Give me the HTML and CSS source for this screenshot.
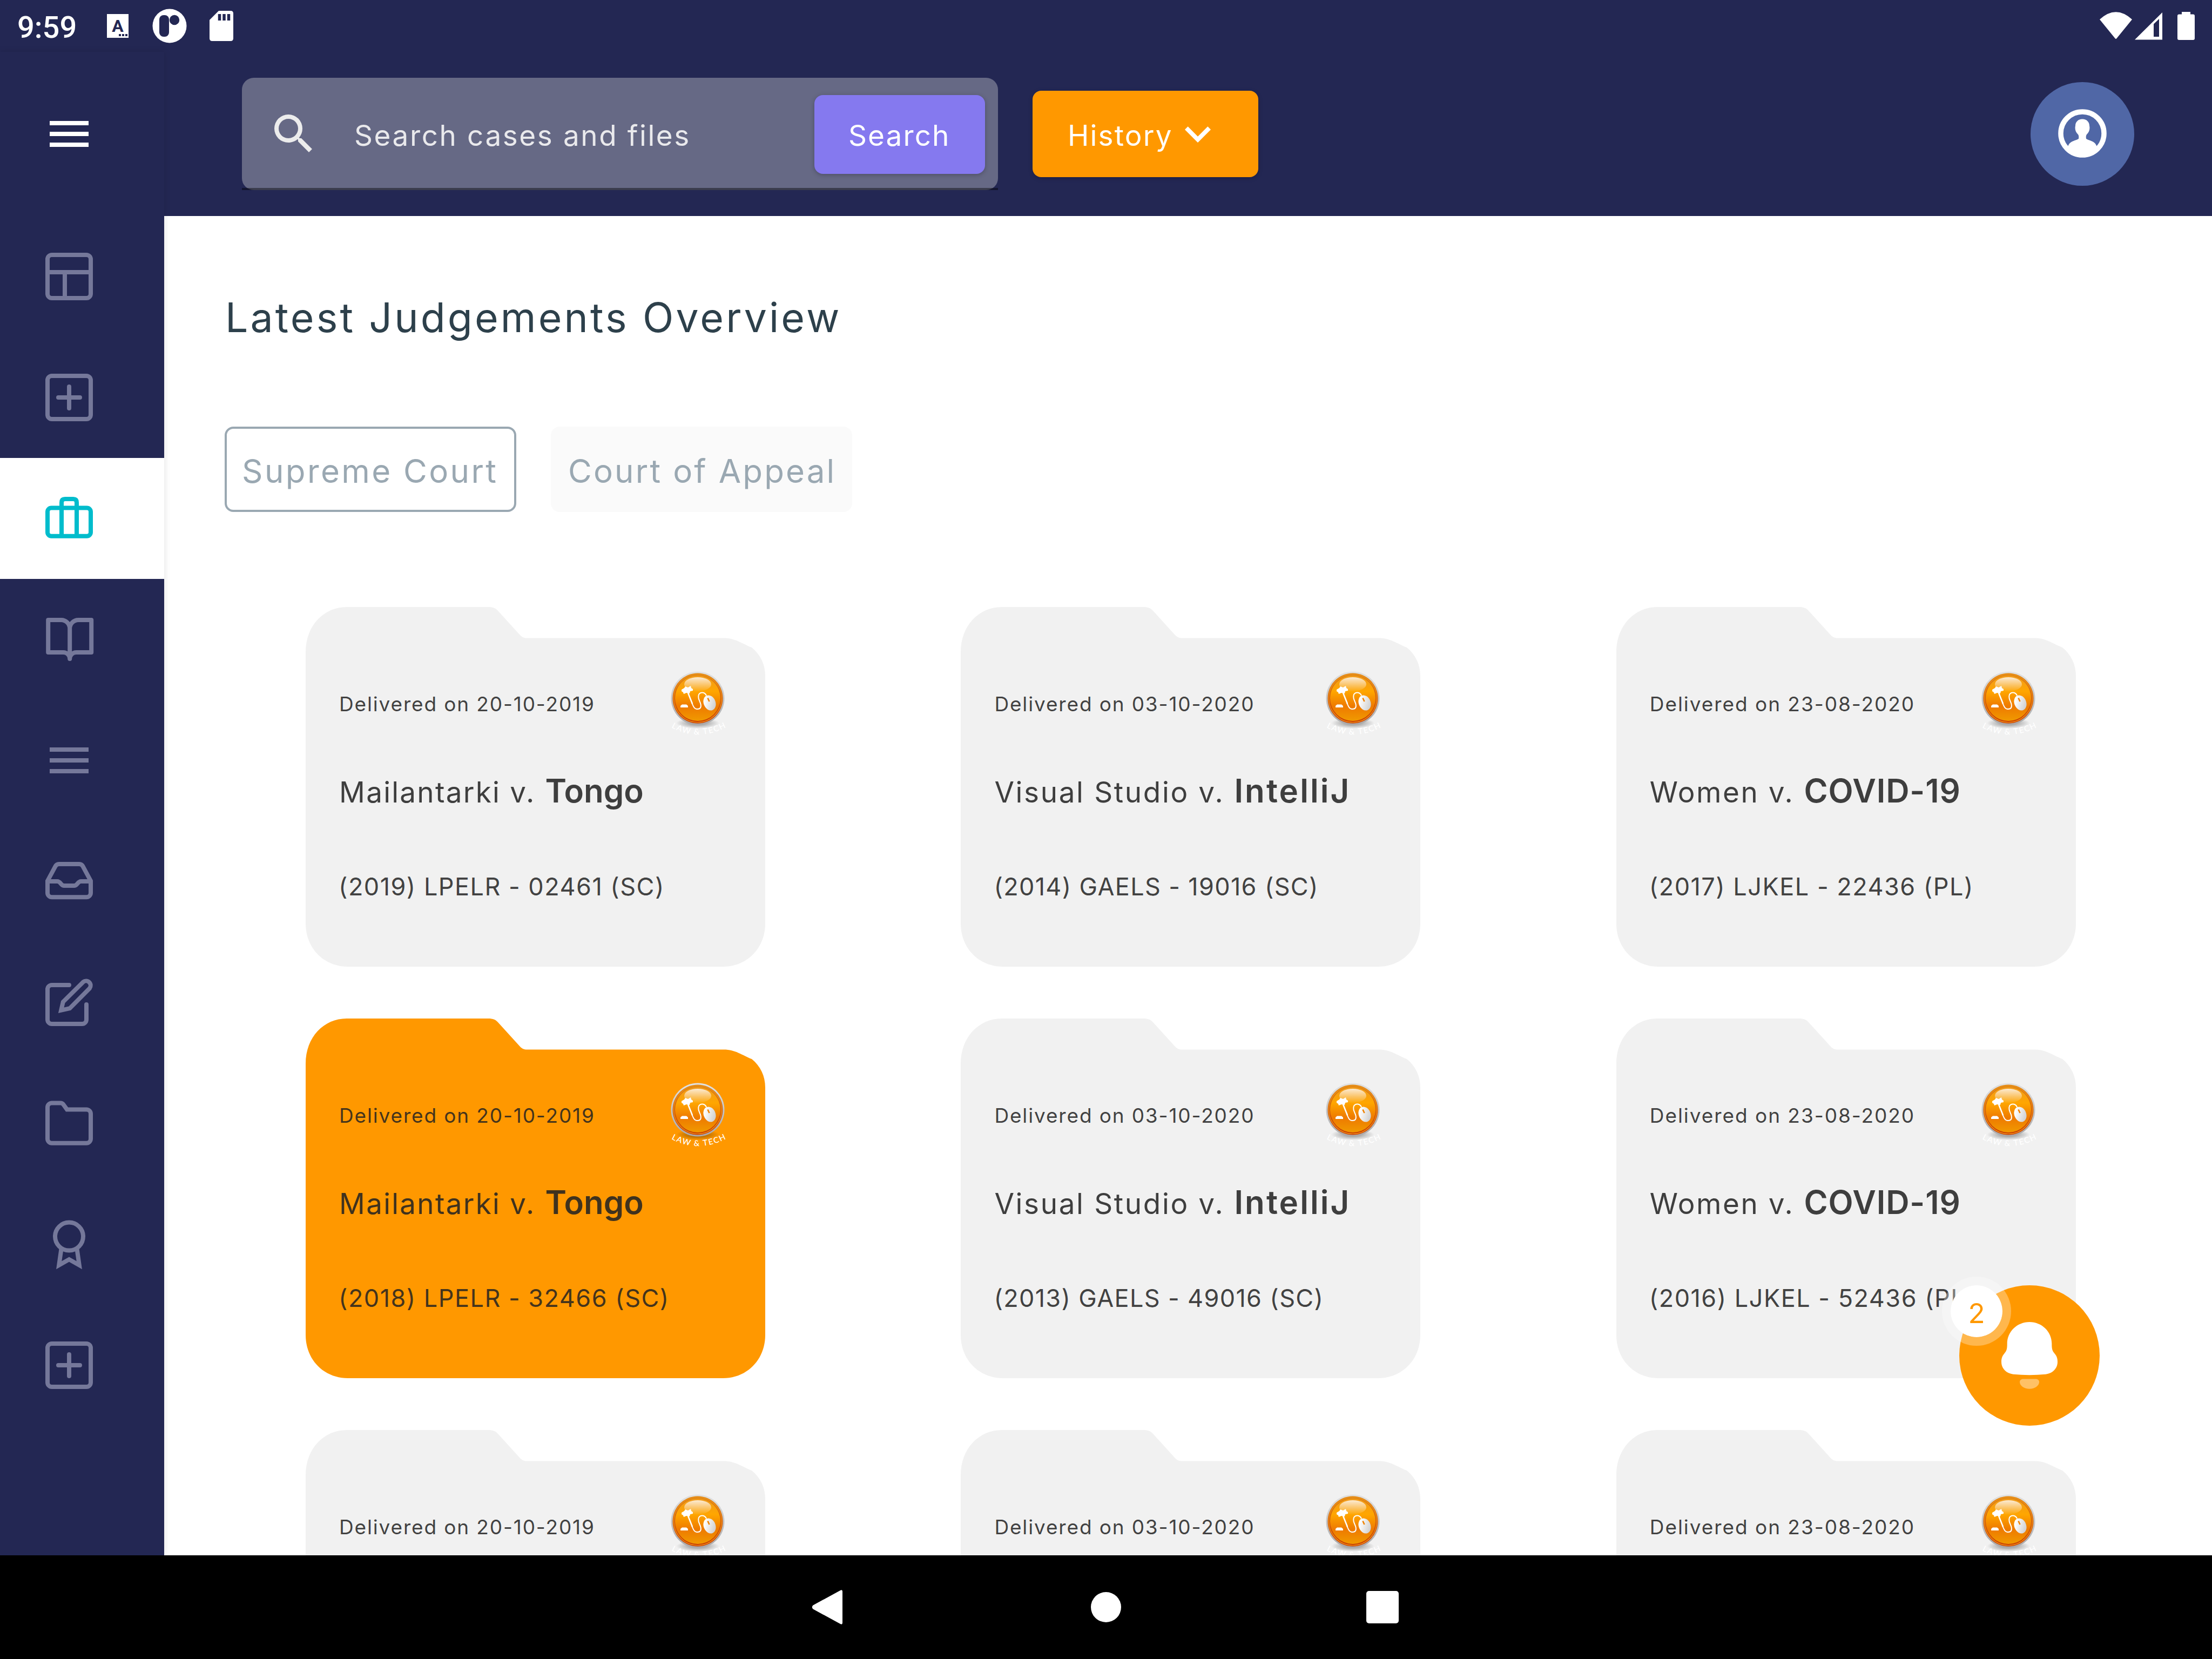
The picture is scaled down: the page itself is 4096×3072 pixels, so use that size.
FILE: index.html
```html
<!DOCTYPE html>
<html lang="en">
<head>
<meta charset="utf-8">
<title>Latest Judgements Overview</title>
<link rel="stylesheet" href="styles.css">
</head>
<body>
<svg class="sprite" aria-hidden="true">
  <defs>
    <linearGradient id="orb" x1="0" y1="0" x2="0" y2="1">
      <stop offset="0" stop-color="#f09a1c"/><stop offset=".35" stop-color="#ffa600"/>
      <stop offset=".68" stop-color="#ee7a00"/><stop offset="1" stop-color="#f09a00"/>
    </linearGradient>
    <linearGradient id="rim" x1="0" y1="0" x2="0" y2="1">
      <stop offset="0" stop-color="#e08a14"/><stop offset="1" stop-color="#c93c00"/>
    </linearGradient>
    <linearGradient id="metal" x1="0" y1="0" x2="0" y2="1">
      <stop offset="0" stop-color="#e2e2e2"/><stop offset="1" stop-color="#a9a9a9"/>
    </linearGradient>
    <linearGradient id="gloss" x1="0" y1="0" x2="0" y2="1">
      <stop offset="0" stop-color="#fff" stop-opacity=".8"/><stop offset="1" stop-color="#fff" stop-opacity=".04"/>
    </linearGradient>
    <linearGradient id="mouse" x1="0" y1="0" x2="1" y2="1">
      <stop offset=".2" stop-color="#fff"/><stop offset="1" stop-color="#c4c4c4"/>
    </linearGradient>
    <radialGradient id="shade">
      <stop offset="0" stop-color="#000" stop-opacity=".45"/><stop offset="1" stop-color="#000" stop-opacity="0"/>
    </radialGradient>
    <symbol id="folder" viewBox="0 0 851 666">
      <path d="M0 84C0 34 34 0 76 0H338C347 0 352 2 357 8L397 52C401 56 404 57.500 410 57.500H774C796 57.500 808 68 826 75C842 88 851 106 851 128V586C851 632 817 666 773 666H78C34 666 0 632 0 586Z"/>
    </symbol>
    <symbol id="logo" viewBox="37 38 110 130">
      <ellipse cx="92" cy="141" rx="40" ry="10" fill="url(#shade)"/>
      <circle cx="92" cy="95" r="49.500" fill="url(#metal)"/>
      <circle cx="92" cy="95" r="46.500" fill="url(#rim)"/>
      <circle cx="92" cy="95" r="44.500" fill="none" stroke="#f0921c" stroke-width="1.200"/>
      <circle cx="92" cy="95" r="42" fill="url(#orb)"/>
      <ellipse cx="92" cy="69" rx="25" ry="13" fill="url(#gloss)"/>
      <path d="M62 79L67 76L69 73L74 75L79 72L80 76L83 78V81L78 82L77 86L71 85L66 87L65 84L62 82Z" fill="#fff"/>
      <path d="M60 112V109L63 106.500H71L74 109V112Z" fill="#fff"/>
      <path d="M74 85L82 105" fill="none" stroke="#fff" stroke-width="2.600"/>
      <path d="M81 103C84 111 86 115 91 115C98 115 99 110 97 104C94 97 92 93 94 88C97 83 105 83 108 90" fill="none" stroke="#fff" stroke-width="2"/>
      <ellipse cx="114" cy="103.500" rx="11" ry="14.500" fill="url(#mouse)" transform="rotate(-22 114 103.500)"/>
      <path d="M110.500 94.500L113.500 101" stroke="#ef8200" stroke-width="2.600"/>
      <path id="arc" d="M43 149Q92 176 146 148" fill="none"/>
      <text class="logo-text"><textPath href="#arc" textLength="106">LAW &amp; TECH</textPath></text>
    </symbol>
    <symbol id="plus" viewBox="0 0 24 24">
      <rect x="2" y="2" width="20" height="20" rx="2"/><path d="M12 7V17M7 12H17" stroke-linecap="round"/>
    </symbol>
  </defs>
</svg>

<header class="status">
  <span class="clock">9:59</span>
  <svg class="st-icons" viewBox="0 0 240 96">
    <rect x="6" y="26" width="40" height="44" fill="#fff"/>
    <text class="st-a" x="26" y="59" text-anchor="middle">A</text>
    <path d="M28 65H32M34 65H38M40 65H44" stroke="#232753" stroke-width="4"/>
    <circle cx="122" cy="48" r="31.500" fill="#fff"/>
    <rect x="103" y="28" width="18" height="40" rx="8" fill="#232753"/>
    <circle cx="131" cy="37" r="9.200" fill="#232753"/>
    <path d="M213 20H235Q240 20 240 25V71Q240 76 235 76H201Q196 76 196 71V37Z" fill="#fff"/>
    <path d="M214.500 26V38M223 26V38M231.500 26V38" stroke="#232753" stroke-width="5.500"/>
  </svg>
  <svg class="st-right" viewBox="0 0 176 96">
    <path d="M0 36Q30 8.500 60 36L31.500 71Q30 73 28.500 71Z" fill="#fff"/>
    <path d="M65 73.500L116 23V73.500Z" fill="#fff"/><path d="M100 44.500L110 35V68H100Z" fill="#232753"/>
    <path d="M152 22H168V26.500H173Q176 26.500 176 29.500V71Q176 74 173 74H147Q144 74 144 71V29.500Q144 26.500 147 26.500H152Z" fill="#fff"/>
  </svg>
</header>

<div class="app">
  <nav class="sidebar">
    <div class="menu"><svg class="icon" viewBox="0 0 24 24"><path d="M3 7H21M3 12H21M3 17H21"/></svg></div>
    <a class="item"><svg class="icon" viewBox="0 0 24 24"><rect x="2" y="2" width="20" height="20" rx="2"/><path d="M2 10H22M10 10V22"/></svg></a>
    <a class="item"><svg class="icon"><use href="#plus"/></svg></a>
    <a class="item active"><svg class="icon" viewBox="0 0 24 24"><rect x="2" y="7.100" width="20" height="13.100" rx="1.800"/><path d="M8.500 20V4.600Q8.500 3 10.100 3H13.900Q15.500 3 15.500 4.600V20"/></svg></a>
    <a class="item"><svg class="icon" viewBox="-.3 0 24 24"><path d="M2 3H8A4 4 0 0 1 12 7V21A3 3 0 0 0 9 18H2ZM22 3H16A4 4 0 0 0 12 7V21A3 3 0 0 1 15 18H22Z" stroke-linejoin="round"/></svg></a>
    <a class="item"><svg class="icon" viewBox="0 0 24 24"><path d="M3 7H21M3 12H21M3 17H21"/></svg></a>
    <a class="item"><svg class="icon" viewBox="0 0 24 24"><path d="M22 12H17.500C15.900 12 15.900 14 14.300 14H9.700C8.100 14 8.100 12 6.500 12H2"/><path d="M5.600 5.100L2 11.800V17.300A2 2 0 0 0 4 19.300H20A2 2 0 0 0 22 17.300V11.800L18.400 5.100A2 2 0 0 0 16.700 4H7.300A2 2 0 0 0 5.600 5.100Z"/></svg></a>
    <a class="item"><svg class="icon" viewBox="0 0 24 24"><path d="M12 4H4A2 2 0 0 0 2 6V20A2 2 0 0 0 4 22H18A2 2 0 0 0 20 20V13" stroke-linecap="round"/><path d="M18.500 2.600A2.100 2.100 0 0 1 21.500 5.500L12.300 14.800L8.300 15.700L9.200 11.800Z"/></svg></a>
    <a class="item"><svg class="icon" viewBox="0 0 24 24"><path d="M2 19.200A2 2 0 0 0 4 21.200H20A2 2 0 0 0 22 19.200V7.600A2 2 0 0 0 20 5.600H11L9.400 3.400Q8.900 2.600 8 2.600H4A2 2 0 0 0 2 4.600Z"/></svg></a>
    <a class="item"><svg class="icon" viewBox="0 0 24 24"><circle cx="12" cy="8.400" r="6.500"/><path d="M8.400 14L7.300 21.700L12 19L16.700 21.700L15.600 14"/></svg></a>
    <a class="item"><svg class="icon"><use href="#plus"/></svg></a>
  </nav>

  <div class="content">
    <div class="topbar">
      <div class="search">
        <svg class="glyph" viewBox="0 0 24 24"><path d="M15.500 14h-.79l-.28-.27A6.470 6.470 0 0 0 16 9.500 6.500 6.500 0 1 0 9.500 16c1.610 0 3.090-.59 4.230-1.570l.27.28v.79l5 4.990L20.490 19l-4.990-5zm-6 0C7.010 14 5 11.990 5 9.500S7.010 5 9.500 5 14 7.010 14 9.500 11.990 14 9.500 14z" fill="#ececec"/></svg>
        <span class="placeholder">Search cases and files</span>
        <button class="btn btn-search">Search</button>
      </div>
      <button class="btn btn-history"><span class="btn-label">History</span><svg class="glyph" viewBox="0 0 24 24"><path d="M7.410 8.590L12 13.170l4.590-4.580L18 10l-6 6-6-6z" fill="#fff"/></svg></button>
      <div class="avatar">
        <svg viewBox="0 0 192 192">
          <circle cx="96" cy="95" r="40" fill="none" stroke="#fff" stroke-width="9.500"/>
          <path d="M96 68.500C104 68.500 109 74 109 81C110.500 88 108 93 104 97C102.500 99 102.500 102 103 105C108 108.500 120 109 122.500 119L124 121.500C118 131 108 137 96 137S74 131 68 121.500L69.500 119C72 109 84 108.500 89 105C89.500 102 89.500 99 88 97C84 93 81.500 88 83 81C83 74 88 68.500 96 68.500Z" fill="#fff"/>
        </svg>
      </div>
    </div>

    <main class="main">
      <h1 class="title">Latest Judgements Overview</h1>
      <div class="tabs">
        <span class="tab tab-on">Supreme Court</span>
        <span class="tab tab-off">Court of Appeal</span>
      </div>
      <section class="grid">
        <article class="card c1"><svg class="shape"><use href="#folder"/></svg><div class="head"><span class="date">Delivered on 20-10-2019</span><svg class="logo"><use href="#logo"/></svg></div><div class="names"><span class="first">Mailantarki v.</span><b class="second">Tongo</b></div><p class="cite">(2019) LPELR - 02461 (SC)</p></article>
        <article class="card c2"><svg class="shape"><use href="#folder"/></svg><div class="head"><span class="date">Delivered on 03-10-2020</span><svg class="logo"><use href="#logo"/></svg></div><div class="names"><span class="first">Visual Studio v.</span><b class="second">IntelliJ</b></div><p class="cite">(2014) GAELS - 19016 (SC)</p></article>
        <article class="card c3"><svg class="shape"><use href="#folder"/></svg><div class="head"><span class="date">Delivered on 23-08-2020</span><svg class="logo"><use href="#logo"/></svg></div><div class="names"><span class="first">Women v.</span><b class="second">COVID-19</b></div><p class="cite">(2017) LJKEL - 22436 (PL)</p></article>

        <article class="card c1 selected"><svg class="shape"><use href="#folder"/></svg><div class="head"><span class="date">Delivered on 20-10-2019</span><svg class="logo"><use href="#logo"/></svg></div><div class="names"><span class="first">Mailantarki v.</span><b class="second">Tongo</b></div><p class="cite">(2018) LPELR - 32466 (SC)</p></article>
        <article class="card c2"><svg class="shape"><use href="#folder"/></svg><div class="head"><span class="date">Delivered on 03-10-2020</span><svg class="logo"><use href="#logo"/></svg></div><div class="names"><span class="first">Visual Studio v.</span><b class="second">IntelliJ</b></div><p class="cite">(2013) GAELS - 49016 (SC)</p></article>
        <article class="card c3"><svg class="shape"><use href="#folder"/></svg><div class="head"><span class="date">Delivered on 23-08-2020</span><svg class="logo"><use href="#logo"/></svg></div><div class="names"><span class="first">Women v.</span><b class="second">COVID-19</b></div><p class="cite">(2016) LJKEL - 52436 (PL)</p></article>

        <article class="card c1"><svg class="shape"><use href="#folder"/></svg><div class="head"><span class="date">Delivered on 20-10-2019</span><svg class="logo"><use href="#logo"/></svg></div></article>
        <article class="card c2"><svg class="shape"><use href="#folder"/></svg><div class="head"><span class="date">Delivered on 03-10-2020</span><svg class="logo"><use href="#logo"/></svg></div></article>
        <article class="card c3"><svg class="shape"><use href="#folder"/></svg><div class="head"><span class="date">Delivered on 23-08-2020</span><svg class="logo"><use href="#logo"/></svg></div></article>
      </section>
    </main>
  </div>

  <div class="fab">
    <svg class="bell" viewBox="128 60 260 260">
      <path d="M258 128C281 128 299.300 146 299.300 168C299.300 178 300 181 305 187C309 192 310 196 310 202C310 214 301 223 288 224.800Q258 227.500 228 224.800C215 223 206 214 206 202C206 196 207 192 211 187C216 181 216.700 178 216.700 168C216.700 146 235 128 258 128Z" fill="#fff"/>
      <path d="M247 233.500H269C274 233.500 276 236 276 239C276 246 268 251.700 258 251.700S240 246 240 239C240 236 242 233.500 247 233.500Z" fill="#fff" fill-opacity=".4"/>
    </svg>
    <span class="badge">2</span>
  </div>
</div>

<footer class="navbar">
  <svg class="nav-icon" viewBox="0 0 96 96"><path d="M17.500 44.500L68 17Q72 15 72 19V77Q72 81 68 79L17.500 51.500Q14 48 17.500 44.500Z"/></svg>
  <svg class="nav-icon" viewBox="0 0 96 96"><circle cx="48" cy="48" r="28"/></svg>
  <svg class="nav-icon" viewBox="0 0 96 96"><rect x="18" y="18" width="60" height="60" rx="5"/></svg>
</footer>
</body>
</html>
```
FILE: styles.css
```css
* { box-sizing: border-box; margin: 0; padding: 0; }

body {
  width: 4096px;
  height: 3072px;
  overflow: hidden;
  display: flex;
  flex-direction: column;
  background: #232753;
  font-family: Inter, "Open Sans", sans-serif;
}

svg { display: block; flex: none; }
.sprite { position: absolute; width: 0; height: 0; }
.logo-text { font: 500 15px Lato, sans-serif; fill: #fff; }

/* status bar */
.status { height: 96px; display: flex; align-items: center; padding: 0 32px; }
.clock { width: 160px; font: 500 56px/66px Roboto, sans-serif; color: #fff; margin-top: 6px; }
.st-icons { width: 240px; height: 96px; }
.st-a { font: 700 32px Roboto, sans-serif; fill: #232753; }
.st-right { width: 176px; height: 96px; margin-left: auto; }

.app { position: relative; height: 2784px; display: flex; }

/* sidebar */
.sidebar { width: 304px; flex: none; display: flex; flex-direction: column; background: #232753; box-shadow: 0 0 12px rgba(0, 0, 0, .12); z-index: 1; }
.menu { height: 304px; display: flex; align-items: center; padding-left: 80px; color: #fff; }
.item { height: 224px; display: flex; align-items: center; padding-left: 80px; color: #75789a; }
.item.active { background: #fff; color: #00bccc; }
.icon { width: 96px; height: 96px; fill: none; stroke: currentColor; stroke-width: 2; }

.content { flex: 1; display: flex; flex-direction: column; }

/* top bar */
.topbar { height: 304px; display: flex; align-items: center; padding: 0 144px; }
.search {
  position: relative;
  width: 1400px;
  height: 208px;
  display: flex;
  align-items: center;
  padding: 0 24px 4px 48px;
  border-radius: 22px;
  background: #666985;
}
.search::after { content: ""; position: absolute; left: 0; right: 0; bottom: 0; height: 4px; background: rgba(0, 0, 0, .42); }
.glyph { width: 96px; height: 96px; }
.search .glyph { margin-top: 4px; }
.placeholder { margin: 10px 0 0 64px; font-size: 53px; line-height: 72px; letter-spacing: 2.6px; color: #e9e9ec; white-space: nowrap; }
.btn { display: flex; align-items: center; border: 0; border-radius: 16px; color: #fff; font: 400 53px/72px Inter, sans-serif; }
.btn-search { width: 316px; height: 146px; margin: 6px 0 0 auto; padding: 3px 0 0 63px; letter-spacing: 2.1px; background: #8579ef; box-shadow: 0 2px 8px rgba(0, 0, 0, .25); }
.btn-history { width: 418px; height: 160px; margin-left: 64px; padding-left: 65px; background: #ff9800; box-shadow: 0 2px 8px rgba(0, 0, 0, .2); }
.btn-label { width: 197px; letter-spacing: 2.2px; padding-top: 5px; text-align: left; }
.btn-history .glyph { margin-left: -4px; }
.avatar { width: 192px; height: 192px; margin-left: auto; border-radius: 50%; background: #5067a6; }

/* judgements */
.main { height: 2480px; overflow: hidden; background: #fff; }
.title { margin: 142px 0 0 113px; font-size: 75px; line-height: 92px; font-weight: 400; letter-spacing: 4.15px; color: #2d404b; }
.tabs { display: flex; gap: 64px; margin: 156px 0 0 112px; }
.tab { height: 158px; display: flex; align-items: center; padding-top: 6px; border-radius: 16px; font-size: 60px; line-height: 70px; color: #9aa8b2; white-space: nowrap; }
.tab-on { width: 540px; padding-left: 28px; border: 4px solid #9aa8b2; letter-spacing: 3.4px; }
.tab-off { width: 558px; padding-left: 32px; background: #fafafa; letter-spacing: 3.15px; }

.grid { display: grid; grid-template-columns: repeat(3, 851px); column-gap: 362.400px; row-gap: 96px; padding: 176px 0 0 262px; }
.card { position: relative; height: 666px; padding: 112px 70px 0 61px; color: rgba(34, 34, 34, .87); }
.shape { position: absolute; inset: 0; width: 851px; height: 666px; fill: #f1f1f1; z-index: 0; }
.selected .shape { fill: #ff9800; }
.head, .names, .cite { position: relative; white-space: nowrap; }
.head { height: 130px; display: flex; justify-content: space-between; }
.date { margin: 46px 0 0 1px; font-size: 37px; line-height: 44px; letter-spacing: var(--date); }
.logo { width: 110px; height: 130px; }
.names { height: 76px; margin: 62px 0 0 1px; display: flex; align-items: baseline; gap: 18px; line-height: 72px; }
.first { font-size: 53px; letter-spacing: var(--first); }
.second { font-size: 60px; font-weight: 600; letter-spacing: var(--second); }
.cite { margin: 110px 0 0; font-size: 45px; line-height: 56px; letter-spacing: var(--cite); }
.c1 { --date: 1.85px; --first: 2.25px; --second: 0; --cite: 1.48px; }
.c2 { --date: 1.85px; --first: 2.65px; --second: 3.1px; --cite: 1.35px; }
.c3 { --date: 1.95px; --first: 2.5px; --second: .87px; --cite: 1.5px; }

/* notifications */
.fab { position: absolute; left: 3628px; top: 2284px; width: 260px; height: 260px; border-radius: 50%; background: #ff9800; z-index: 2; }
.bell { width: 260px; height: 260px; }
.badge {
  position: absolute;
  left: -32px;
  top: -16px;
  width: 128px;
  height: 128px;
  padding-top: 6px;
  border: 16px solid rgba(255, 255, 255, .3);
  border-radius: 50%;
  background: #fff;
  background-clip: padding-box;
  color: #ff9800;
  font-size: 51px;
  line-height: 92px;
  text-align: center;
}

/* system navigation */
.navbar { height: 192px; display: flex; align-items: center; justify-content: center; gap: 416px; background: #000; }
.nav-icon { width: 96px; height: 96px; fill: #fff; }
```
